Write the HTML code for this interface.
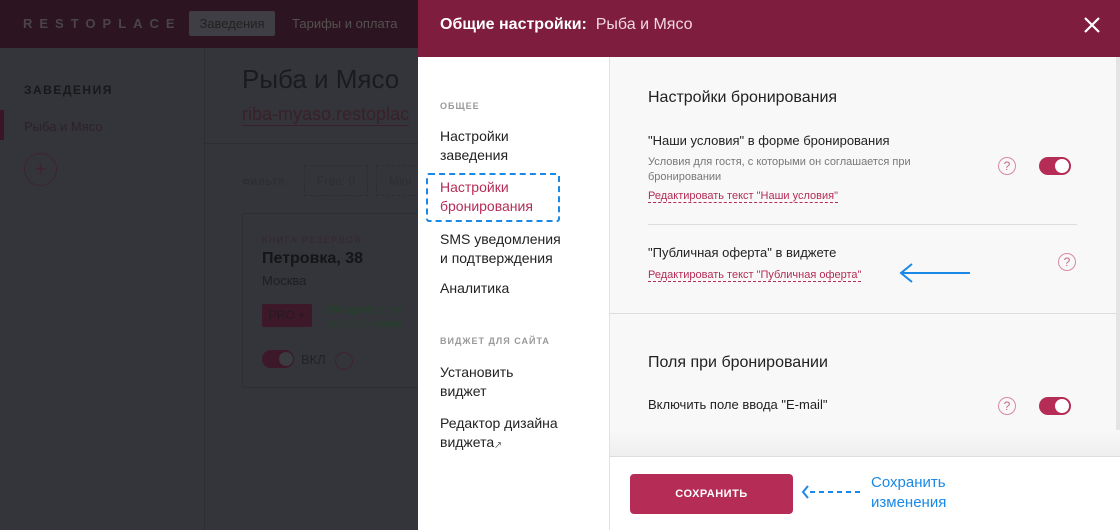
<!DOCTYPE html><html><head><meta charset="utf-8"><style>
*{margin:0;padding:0;box-sizing:border-box}
body{width:1120px;height:530px;overflow:hidden;font-family:"Liberation Sans","Noto Sans CJK SC",sans-serif;background:#33353a;position:relative}
.a{position:absolute;white-space:nowrap}
.q{position:absolute;width:18px;height:18px;border:1px solid #d98aa3;border-radius:50%;color:#c46887;font-size:12px;text-align:center;line-height:16px}
.tg{position:absolute;width:32px;height:18px;border-radius:9px;background:#b52c56}
.tg:after{content:"";position:absolute;right:2px;top:2px;width:14px;height:14px;border-radius:50%;background:#fff}
.lk{color:#b52c56;font-size:12px;border-bottom:1px dashed #b52c56}
</style></head><body>
<div class="a" style="left:0;top:0;width:418px;height:48px;background:#2c1520"></div>
<div class="a" style="left:23px;top:16px;color:#4a4448;font-size:13px;letter-spacing:7px;font-weight:bold">RESTOPLACE</div>
<div class="a" style="left:189px;top:11px;width:86px;height:25px;background:#3f3e44;border-radius:2px;color:#222;font-size:13px;line-height:25px;text-align:center">Заведения</div>
<div class="a" style="left:292px;top:16px;color:#55504f;font-size:13px">Тарифы и оплата</div>
<div class="a" style="left:204px;top:48px;width:1px;height:482px;background:#2c2e32"></div>
<div class="a" style="left:205px;top:143px;width:213px;height:1px;background:#2c2e32"></div>
<div class="a" style="left:24px;top:83px;color:#18181a;font-size:12px;font-weight:bold;letter-spacing:1.5px">ЗАВЕДЕНИЯ</div>
<div class="a" style="left:0;top:110px;width:4px;height:30px;background:#3a1525"></div>
<div class="a" style="left:24px;top:119px;color:#2e2228;font-size:13px">Рыба и Мясо</div>
<div class="a" style="left:24px;top:153px;width:33px;height:33px;border:1px solid #3e2430;border-radius:50%;color:#3e2430;text-align:center;line-height:30px;font-size:22px">+</div>
<div class="a" style="left:242px;top:64px;color:#1a1b1e;font-size:26px">Рыба и Мясо</div>
<div class="a" style="left:242px;top:104px;color:#3a2028;font-size:18px;border-bottom:1px solid #3a2028">riba-myaso.restoplac</div>
<div class="a" style="left:242px;top:177px;color:#2b2d31;font-size:9px;font-weight:bold;letter-spacing:1px">ФИЛЬТР:</div>
<div class="a" style="left:304px;top:165px;width:64px;height:31px;border:1px dashed #2c2e32;color:#2c2e32;font-size:12px;padding:8px 12px">Free: 0</div>
<div class="a" style="left:376px;top:165px;width:50px;height:31px;border:1px dashed #2c2e32;color:#2c2e32;font-size:12px;padding:8px 12px">Mini</div>
<div class="a" style="left:242px;top:213px;width:190px;height:175px;border:1px solid #2c2e32;border-radius:3px;background:#33353a"></div>
<div class="a" style="left:262px;top:235px;color:#3a2530;font-size:9px;letter-spacing:1.5px">КНИГА РЕЗЕРВОВ</div>
<div class="a" style="left:262px;top:250px;color:#151517;font-size:16px;font-weight:bold">Петровка, 38</div>
<div class="a" style="left:262px;top:273px;color:#1d1e21;font-size:13px">Москва</div>
<div class="a" style="left:262px;top:304px;width:50px;height:23px;background:#3c1828;border-radius:2px;color:#251a20;font-size:12px;text-align:center;line-height:23px">PRO +</div>
<div class="a" style="left:325px;top:303px;color:#25402a;font-size:11px;line-height:14px"><b>356 дней</b> до от<br>тестового пери</div>
<div class="a" style="left:262px;top:350px;width:32px;height:18px;border-radius:9px;background:#3c1828"></div>
<div class="a" style="left:279px;top:352px;width:14px;height:14px;border-radius:50%;background:#3a3c40"></div>
<div class="a" style="left:301px;top:352px;color:#222;font-size:13px">ВКЛ</div>
<div class="a" style="left:335px;top:352px;width:18px;height:18px;border:1px solid #3e2430;border-radius:50%"></div>

<div class="a" style="left:418px;top:0;width:702px;height:57px;background:#7f1d3f"></div>
<div class="a" style="left:440px;top:16px;color:#fff;font-size:16px"><b>Общие настройки:</b>&nbsp;&nbsp;<span style="color:#f2d8e0">Рыба и Мясо</span></div>
<svg class="a" style="left:1084px;top:17px" width="16" height="16"><path d="M1 1L15 15M15 1L1 15" stroke="#fff" stroke-width="2.2"/></svg>
<div class="a" style="left:418px;top:57px;width:192px;height:473px;background:#fff;border-right:1px solid #e2e2e2"></div>
<div class="a" style="left:440px;top:101px;color:#999;font-size:9px;font-weight:bold;letter-spacing:1px">ОБЩЕЕ</div>
<div class="a" style="left:440px;top:127px;color:#222;font-size:14px;line-height:19px">Настройки<br>заведения</div>
<div class="a" style="left:426px;top:173px;width:134px;height:49px;border:2px dashed #1a88e6;border-radius:3px"></div>
<div class="a" style="left:440px;top:178px;color:#b52c56;font-size:14px;line-height:19px">Настройки<br>бронирования</div>
<div class="a" style="left:440px;top:230px;color:#222;font-size:14px;line-height:19px">SMS уведомления<br>и подтверждения</div>
<div class="a" style="left:440px;top:280px;color:#222;font-size:14px">Аналитика</div>
<div class="a" style="left:440px;top:336px;color:#999;font-size:9px;font-weight:bold;letter-spacing:1px">ВИДЖЕТ ДЛЯ САЙТА</div>
<div class="a" style="left:440px;top:363px;color:#222;font-size:14px;line-height:19px">Установить<br>виджет</div>
<div class="a" style="left:440px;top:414px;color:#222;font-size:14px;line-height:19px">Редактор дизайна<br>виджета<span style="font-size:8px;vertical-align:-1px">↗</span></div>

<div class="a" style="left:610px;top:57px;width:510px;height:400px;background:#f8f8f8"></div>
<div class="a" style="left:1116px;top:57px;width:4px;height:373px;background:#e4e4e4"></div>
<div class="a" style="left:648px;top:89px;color:#222;font-size:16px">Настройки бронирования</div>
<div class="a" style="left:648px;top:133px;color:#222;font-size:13px">"Наши условия" в форме бронирования</div>
<div class="a" style="left:648px;top:155px;color:#777;font-size:11px;line-height:15px">Условия для гостя, с которыми он соглашается при<br>бронировании</div>
<div class="a" style="left:648px;top:186px"><span class="lk" style="font-size:11px">Редактировать текст "Наши условия"</span></div>
<div class="q" style="left:998px;top:157px">?</div>
<div class="tg" style="left:1039px;top:157px"></div>
<div class="a" style="left:648px;top:224px;width:429px;height:1px;background:#ddd"></div>
<div class="a" style="left:648px;top:245px;color:#222;font-size:13px">"Публичная оферта" в виджете</div>
<div class="a" style="left:648px;top:265px"><span class="lk" style="font-size:11px">Редактировать текст "Публичная оферта"</span></div>
<svg class="a" style="left:898px;top:262px" width="74" height="22"><path d="M72 11H4M14 2L3 11L14 20" stroke="#1a88e6" stroke-width="2" fill="none"/></svg>
<div class="q" style="left:1058px;top:253px">?</div>
<div class="a" style="left:610px;top:313px;width:506px;height:1px;background:#ddd"></div>
<div class="a" style="left:648px;top:354px;color:#222;font-size:16px">Поля при бронировании</div>
<div class="a" style="left:648px;top:397px;color:#222;font-size:13px">Включить поле ввода "E-mail"</div>
<div class="q" style="left:998px;top:397px">?</div>
<div class="tg" style="left:1039px;top:397px"></div>
<div class="a" style="left:610px;top:430px;width:510px;height:27px;background:linear-gradient(#f8f8f8,#eee)"></div>
<div class="a" style="left:610px;top:456px;width:510px;height:1px;background:#ddd"></div>
<div class="a" style="left:610px;top:457px;width:510px;height:73px;background:#fff"></div>
<div class="a" style="left:630px;top:474px;width:163px;height:40px;background:#b52c56;border-radius:4px;color:#fff;font-size:11px;font-weight:bold;text-align:center;line-height:40px;letter-spacing:.5px">СОХРАНИТЬ</div>
<svg class="a" style="left:800px;top:484px" width="62" height="16"><path d="M60 8H6" stroke="#1a88e6" stroke-width="2" stroke-dasharray="5 4" fill="none"/><path d="M8 2L3 8L8 14" stroke="#1a88e6" stroke-width="2" fill="none"/></svg>
<div class="a" style="left:871px;top:473px;color:#1a88e6;font-size:15px;line-height:20px">Сохранить<br>изменения</div>
</body></html>
